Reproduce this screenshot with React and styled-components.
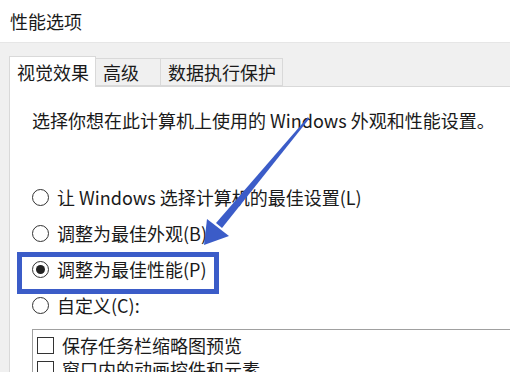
import React from 'react';
import styled, { createGlobalStyle } from 'styled-components';

const GlobalStyle = createGlobalStyle`
	body {
		margin: 0;
		font-family: "Noto Sans CJK SC", "Noto Sans", sans-serif;
		color: #1a1a1a;
	}
`

const Window = styled.div`
	position: relative;
	width: 510px;
	height: 372px;
	overflow: hidden;
	background: #f0f0f0;
`

const TitleBar = styled.div`
	height: 43px;
	background: #fff;
	border-bottom: 1px solid #e6e6e6;
	display: flex;
	align-items: center;
	padding-left: 10px;
	font-size: 18px;
	box-sizing: border-box;
`

const Body = styled.div`
	padding: 13px 0 0 9px;
`

const TabRow = styled.div`
	display: flex;
	align-items: flex-end;
	height: 30px;
`

const Tab = styled.div`
	box-sizing: border-box;
	height: ${p => (p.$active ? '31px' : '28px')};
	min-width: 65px;
	padding: 0 6px 0 7px;
	display: flex;
	align-items: center;
	font-size: 18px;
	line-height: 24px;
	background: ${p => (p.$active ? '#fff' : '#f0f0f0')};
	border: 1px solid #d9d9d9;
	border-bottom: ${p => (p.$active ? 'none' : '1px solid #d9d9d9')};
	border-left: ${p => (p.$first ? '1px solid #d9d9d9' : 'none')};
	margin-bottom: ${p => (p.$active ? '-1px' : '0')};
	position: relative;
	z-index: ${p => (p.$active ? 1 : 0)};
`

const Panel = styled.div`
	background: #fff;
	border: 1px solid #d9d9d9;
	border-right: none;
	height: 300px;
	padding: 21px 0 0 22px;
	box-sizing: border-box;
`

const Intro = styled.div`
	font-size: 18px;
	line-height: 24px;
	white-space: nowrap;
`

const RadioList = styled.div`
	margin-top: 53px;
	display: flex;
	flex-direction: column;
	gap: 12px;
`

const RadioRow = styled.div`
	display: flex;
	align-items: center;
	height: 24px;
	line-height: 24px;
	font-size: 18px;
	white-space: nowrap;
`

const RadioCircle = styled.span`
	width: 17px;
	height: 17px;
	box-sizing: border-box;
	border: 1px solid #333;
	border-radius: 50%;
	margin-right: 8px;
	flex-shrink: 0;
	display: flex;
	align-items: center;
	justify-content: center;
	&::after {
		content: '';
		width: 9px;
		height: 9px;
		border-radius: 50%;
		background: #222;
		display: ${p => (p.$checked ? 'block' : 'none')};
	}
`

const ListBox = styled.div`
	margin-top: 12px;
	border: 1px solid #a0a0a0;
	border-right: none;
	padding: 4px 0 0 4px;
	display: flex;
	flex-direction: column;
	gap: 2px;
`

const CheckRow = styled.div`
	display: flex;
	align-items: center;
	height: 22px;
	line-height: 22px;
	font-size: 18px;
	white-space: nowrap;
`

const CheckBox = styled.span`
	width: 17px;
	height: 17px;
	box-sizing: border-box;
	border: 1px solid #333;
	margin-right: 8px;
	flex-shrink: 0;
`

const Highlight = styled.div`
	position: absolute;
	left: 17px;
	top: 252px;
	width: 202px;
	height: 42px;
	box-sizing: border-box;
	border: 5px solid #3b5cc8;
	pointer-events: none;
`

const Arrow = styled.svg`
	position: absolute;
	left: 0;
	top: 0;
	pointer-events: none;
`

const radios = [
	{ label: '让 Windows 选择计算机的最佳设置(L)' },
	{ label: '调整为最佳外观(B)' },
	{ label: '调整为最佳性能(P)', checked: true },
	{ label: '自定义(C):' },
]

const App = () => {
	return (
		<Window>
			<GlobalStyle />
			<TitleBar>性能选项</TitleBar>
			<Body>
				<TabRow>
					<Tab $active $first>视觉效果</Tab>
					<Tab>高级</Tab>
					<Tab>数据执行保护</Tab>
				</TabRow>
				<Panel>
					<Intro>选择你想在此计算机上使用的 Windows 外观和性能设置。</Intro>
					<RadioList>
						{radios.map(r => (
							<RadioRow key={r.label}>
								<RadioCircle $checked={r.checked} />
								{r.label}
							</RadioRow>
						))}
					</RadioList>
					<ListBox>
						<CheckRow><CheckBox />保存任务栏缩略图预览</CheckRow>
						<CheckRow><CheckBox />窗口内的动画控件和元素</CheckRow>
					</ListBox>
				</Panel>
			</Body>
			<Highlight />
			<Arrow width="510" height="372" viewBox="0 0 510 372">
				<polygon points="308,117 309,119 222,228 216,223" fill="#3b5cc8" />
				<polygon points="204,245 207,219 229,236" fill="#3b5cc8" />
			</Arrow>
		</Window>
	);
}

export default App;
